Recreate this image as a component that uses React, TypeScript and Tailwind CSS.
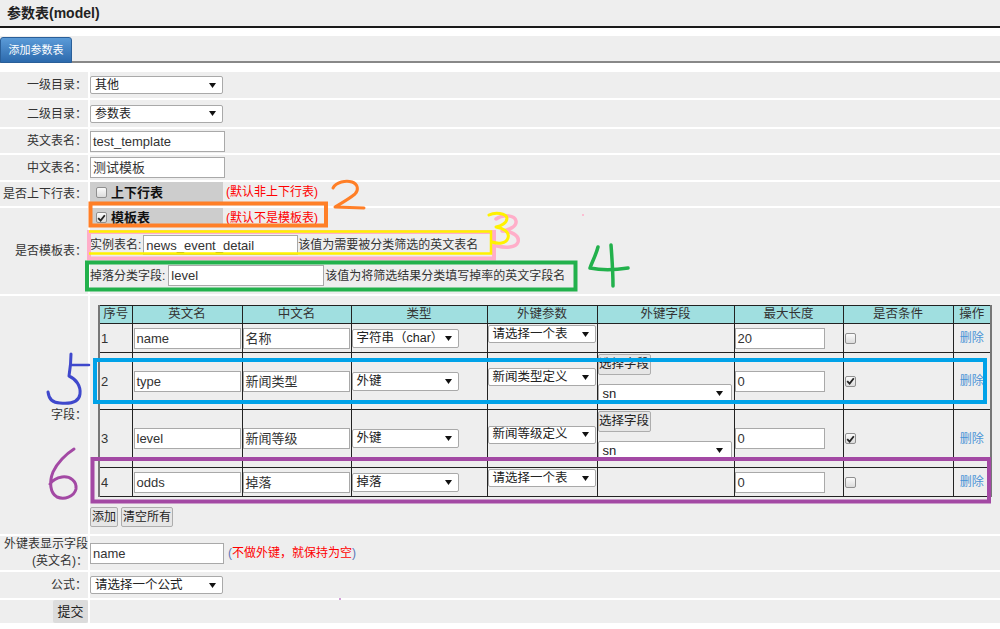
import React from "react";

const F = "font-['Liberation_Sans','Noto_Sans_CJK_SC',sans-serif]";

function Arrow() {
  return (
    <svg width="7" height="5" viewBox="0 0 7 5" className="shrink-0">
      <path d="M0 0H7L3.5 5Z" fill="#111" />
    </svg>
  );
}

function Select({ text, cls }: { text: string; cls: string }) {
  return (
    <div
      className={`flex items-center justify-between bg-white border border-[#a9a9a9] rounded-[2px] pl-[4px] pr-[6px] text-[#222] leading-none whitespace-nowrap overflow-hidden ${cls}`}
    >
      <span>{text}</span>
      <Arrow />
    </div>
  );
}

function Input({ text, cls }: { text: string; cls: string }) {
  return (
    <div
      className={`flex items-center bg-white border border-[#a9a9a9] pl-[2px] text-[13px] text-[#333] leading-none whitespace-nowrap ${cls}`}
    >
      {text}
    </div>
  );
}

function Check({ checked }: { checked?: boolean }) {
  return (
    <div className="w-[11px] h-[11px] shrink-0 rounded-[2px] border border-[#8f8f8f] bg-linear-to-b from-[#fbfbfb] to-[#dcdcdc] flex items-center justify-center">
      {checked && (
        <svg width="9" height="8" viewBox="0 0 9 8">
          <path d="M1.2 4.2L3.6 6.6L7.8 1.2" stroke="#222" strokeWidth="1.8" fill="none" />
        </svg>
      )}
    </div>
  );
}

function Label({ children }: { children: React.ReactNode }) {
  return (
    <div className="bg-[#eee] flex items-center justify-end pr-[1px] text-[12px] leading-none text-[#333] whitespace-nowrap">
      {children}
    </div>
  );
}

function Btn({ children }: { children: React.ReactNode }) {
  return (
    <div className="h-[20px] px-[1px] bg-[#e6e6e6] border border-[#adadad] rounded-[2px] text-[12px] leading-none text-[#222] flex items-center">
      {children}
    </div>
  );
}

type Row = {
  n: string;
  en: string;
  cn: string;
  type: string;
  fk: string;
  fkField: boolean;
  max: string;
  cond: boolean;
  h: string;
};

const rows: Row[] = [
  { n: "1", en: "name", cn: "名称", type: "字符串（char）", fk: "请选择一个表", fkField: false, max: "20", cond: false, h: "h-[29px]" },
  { n: "2", en: "type", cn: "新闻类型", type: "外键", fk: "新闻类型定义", fkField: true, max: "0", cond: true, h: "h-[57px]" },
  { n: "3", en: "level", cn: "新闻等级", type: "外键", fk: "新闻等级定义", fkField: true, max: "0", cond: true, h: "h-[58px]" },
  { n: "4", en: "odds", cn: "掉落", type: "掉落", fk: "请选择一个表", fkField: false, max: "0", cond: false, h: "h-[29px]" },
];

const heads = ["序号", "英文名", "中文名", "类型", "外键参数", "外键字段", "最大长度", "是否条件", "操作"];

function FieldTable() {
  return (
    <table className="ml-[8px] table-fixed w-[892px] border-collapse border-x-2 border-x-[#777]">
      <colgroup>
        <col className="w-[33px]" />
        <col className="w-[110px]" />
        <col className="w-[109px]" />
        <col className="w-[136px]" />
        <col className="w-[110px]" />
        <col className="w-[137px]" />
        <col className="w-[109px]" />
        <col className="w-[110px]" />
        <col className="w-[38px]" />
      </colgroup>
      <thead>
        <tr className="h-[18px]">
          {heads.map((h) => (
            <th
              key={h}
              className="bg-[#a0dfe0] border border-[#222] p-0 font-normal text-[12.5px] leading-none text-[#333] text-center whitespace-nowrap"
            >
              {h}
            </th>
          ))}
        </tr>
      </thead>
      <tbody>
        {rows.map((r) => (
          <tr key={r.n} className={r.h}>
            <td className="border border-[#222] p-0 pl-[1px] text-[13px] leading-none text-[#333] align-middle">{r.n}</td>
            <td className="border border-[#222] p-0 pl-[1px] align-middle">
              <Input text={r.en} cls="w-[107px] h-[21px]" />
            </td>
            <td className="border border-[#222] p-0 align-middle">
              <Input text={r.cn} cls="w-[107px] h-[21px]" />
            </td>
            <td className="border border-[#222] p-0 align-middle">
              <Select text={r.type} cls="w-[107px] h-[19px] text-[12.5px]" />
            </td>
            <td className="border border-[#222] p-0 align-middle">
              <Select text={r.fk} cls="w-[108px] h-[18px] text-[12.5px] mb-[8px]" />
            </td>
            <td className={`border border-[#222] p-0 ${r.fkField ? "align-top pt-[1px]" : "align-middle"}`}>
              {r.fkField && (
                <div className="flex flex-col items-start">
                  <div className="w-[53px] h-[21px] bg-[#e6e6e6] border border-[#adadad] rounded-[2px] text-[12.5px] leading-none text-[#222] flex items-center justify-center">
                    选择字段
                  </div>
                  <Select text="sn" cls="mt-[9px] w-[134px] h-[19px] text-[13px] pr-[8px]" />
                </div>
              )}
            </td>
            <td className="border border-[#222] p-0 align-middle">
              <Input text={r.max} cls="w-[90px] h-[21px]" />
            </td>
            <td className="border border-[#222] p-0 pl-[1px] align-middle">
              <Check checked={r.cond} />
            </td>
            <td className="border border-[#222] p-0 text-center text-[12px] leading-none text-[#4a94d6] align-middle">删除</td>
          </tr>
        ))}
      </tbody>
    </table>
  );
}

function Overlay() {
  const s = { fill: "none", strokeLinecap: "round" as const, strokeLinejoin: "round" as const };
  return (
    <svg className="absolute left-0 top-0 pointer-events-none" width="1000" height="629" viewBox="0 0 1000 629">
      {/* 2 */}
      <rect x="90.5" y="203.5" width="235.5" height="22" stroke="#ff7f27" strokeWidth="4" fill="none" />
      <path d="M333 188 C336 182 346 180 352 182 C358 184 359 190 355 194 C349 199 340 204 335 207 L364 208" stroke="#ff7f27" strokeWidth="3" {...s} />
      {/* 3 */}
      <rect x="89" y="232" width="405" height="26.5" stroke="#ffaec9" strokeWidth="4" fill="none" />
      <path d="M89 231.5 H491 V253.5 H89" stroke="#fff200" strokeWidth="2.5" fill="none" />
      <path d="M496 219 C503 214 515 215 516 221 C517 227 508 230 502 231 C510 231 520 235 518 242 C516 248 505 248 497 246" stroke="#ffaec9" strokeWidth="3.5" {...s} />
      <path d="M489 215 C495 212 506 213 507 218 C507 223 501 226 496 227 C503 228 510 232 508 238 C506 244 498 244 492 242" stroke="#fff200" strokeWidth="3" {...s} />
      <circle cx="583" cy="215" r="1" fill="#ffaec9" />
      {/* 4 */}
      <rect x="87" y="262.5" width="488.5" height="27" stroke="#22b14c" strokeWidth="4" fill="none" />
      <path d="M598 247 C596 255 592 262 590 268 C600 270 615 270 628 268" stroke="#22b14c" strokeWidth="3.5" {...s} />
      <path d="M611 245 C612 258 613 272 613 286" stroke="#22b14c" strokeWidth="3.5" {...s} />
      {/* 5 */}
      <rect x="95" y="360" width="890" height="42" stroke="#00a2e8" strokeWidth="4" fill="none" />
      <path d="M71 354 C71 360 70 370 69 376 C76 379 81 386 80 394 C79 402 70 404 60 403 C53 403 49 400 48 392" stroke="#3f48cc" strokeWidth="3" {...s} />
      <path d="M72 365 H89" stroke="#3f48cc" strokeWidth="2.5" {...s} />
      {/* 6 */}
      <rect x="92.5" y="459" width="896.5" height="42.5" stroke="#a349a4" strokeWidth="4" fill="none" />
      <path d="M74 449 C66 454 57 463 53 472 C49 482 50 493 57 497 C64 500 74 497 76 489 C77 481 70 476 62 477 C56 478 52 481 50 484" stroke="#a349a4" strokeWidth="3" {...s} />
      <circle cx="340" cy="599" r="1" fill="#c07cc8" />
    </svg>
  );
}

export default function App() {
  return (
    <div className={`relative w-[1000px] h-[629px] bg-white overflow-hidden ${F}`}>
      <div className="h-[28px] bg-[#eee] border-b-2 border-[#1a1a1a] flex items-center pl-[7px]">
        <span className="text-[14px] font-bold leading-none text-[#222]">参数表(model)</span>
      </div>
      <div className="mt-[8px] h-[27px] bg-[#eee] border-b-2 border-[#888] flex items-end">
        <div className="w-[72px] h-[26px] -mb-[2px] rounded-t-[3px] bg-linear-to-b from-[#5b9bd8] to-[#2c6aad] border border-[#2a5f99] text-white text-[11px] leading-none flex items-center justify-center">
          添加参数表
        </div>
      </div>

      <div className="mt-[9px] grid grid-cols-[88px_910px] grid-rows-[26px_27px_24px_25px_24px_86px_238px_34px_26px_23px] gap-[2px]">
        <Label>一级目录：</Label>
        <div className="bg-[#eee] flex items-center">
          <Select text="其他" cls="w-[133px] h-[18px] text-[12px]" />
        </div>

        <Label>二级目录：</Label>
        <div className="bg-[#eee] flex items-center">
          <Select text="参数表" cls="w-[133px] h-[18px] text-[12px]" />
        </div>

        <Label>英文表名：</Label>
        <div className="bg-[#eee] flex items-center">
          <Input text="test_template" cls="w-[135px] h-[21px]" />
        </div>

        <Label>中文表名：</Label>
        <div className="bg-[#eee] flex items-center">
          <Input text="测试模板" cls="w-[135px] h-[21px]" />
        </div>

        <Label>是否上下行表：</Label>
        <div className="bg-[#eee] flex items-start">
          <div className="w-[133px] h-[20px] bg-[#cdcdcd] flex items-center pl-[6px] gap-[4px]">
            <Check />
            <span className="font-bold text-[13px] leading-none text-[#111]">上下行表</span>
          </div>
          <span className="ml-[3px] h-[20px] flex items-center text-[12px] leading-none text-[#f00]">(默认非上下行表)</span>
        </div>

        <Label>是否模板表：</Label>
        <div className="bg-[#eee] flex flex-col items-start">
          <div className="flex items-center h-[19px]">
            <div className="w-[133px] h-[19px] bg-[#cdcdcd] flex items-center pl-[6px] gap-[4px]">
              <Check checked />
              <span className="font-bold text-[13px] leading-none text-[#111]">模板表</span>
            </div>
            <span className="ml-[3px] text-[12px] leading-none text-[#f00]">(默认不是模板表)</span>
          </div>
          <div className="mt-[8px] h-[20px] flex items-center text-[12px] leading-none text-[#333] whitespace-nowrap">
            <span className="mr-[2px]">实例表名:</span>
            <Input text="news_event_detail" cls="w-[155px] h-[20px]" />
            <span>该值为需要被分类筛选的英文表名</span>
          </div>
          <div className="mt-[10px] h-[21px] flex items-center text-[12px] leading-none text-[#333] whitespace-nowrap">
            <span className="mr-[3px]">掉落分类字段:</span>
            <Input text="level" cls="w-[156px] h-[21px]" />
            <span className="ml-[1px]">该值为将筛选结果分类填写掉率的英文字段名</span>
          </div>
        </div>

        <Label>字段：</Label>
        <div className="bg-[#eee] flex flex-col items-start pt-[9px]">
          <FieldTable />
          <div className="mt-[10px] flex gap-[3px]">
            <Btn>添加</Btn>
            <Btn>清空所有</Btn>
          </div>
        </div>

        <div className="bg-[#eee] flex flex-col items-end justify-center text-[12px] leading-[17px] text-[#333] whitespace-nowrap">
          <span>外键表显示字段</span>
          <span>(英文名)：</span>
        </div>
        <div className="bg-[#eee] flex items-center">
          <Input text="name" cls="w-[134px] h-[21px]" />
          <span className="ml-[4px] text-[12px] leading-none">
            <span className="text-[#5a78b8]">(</span>
            <span className="text-[#f00]">不做外键，就保持为空</span>
            <span className="text-[#5a78b8]">)</span>
          </span>
        </div>

        <Label>公式：</Label>
        <div className="bg-[#eee] flex items-center">
          <Select text="请选择一个公式" cls="w-[133px] h-[18px] text-[12.5px]" />
        </div>

        <div className="bg-[#eee] flex justify-end">
          <div className="w-[35px] bg-[#dcdcdc] rounded-[2px] text-[13px] leading-none text-[#222] flex items-center justify-center">
            提交
          </div>
        </div>
        <div className="bg-[#eee]" />
      </div>

      <Overlay />
    </div>
  );
}
